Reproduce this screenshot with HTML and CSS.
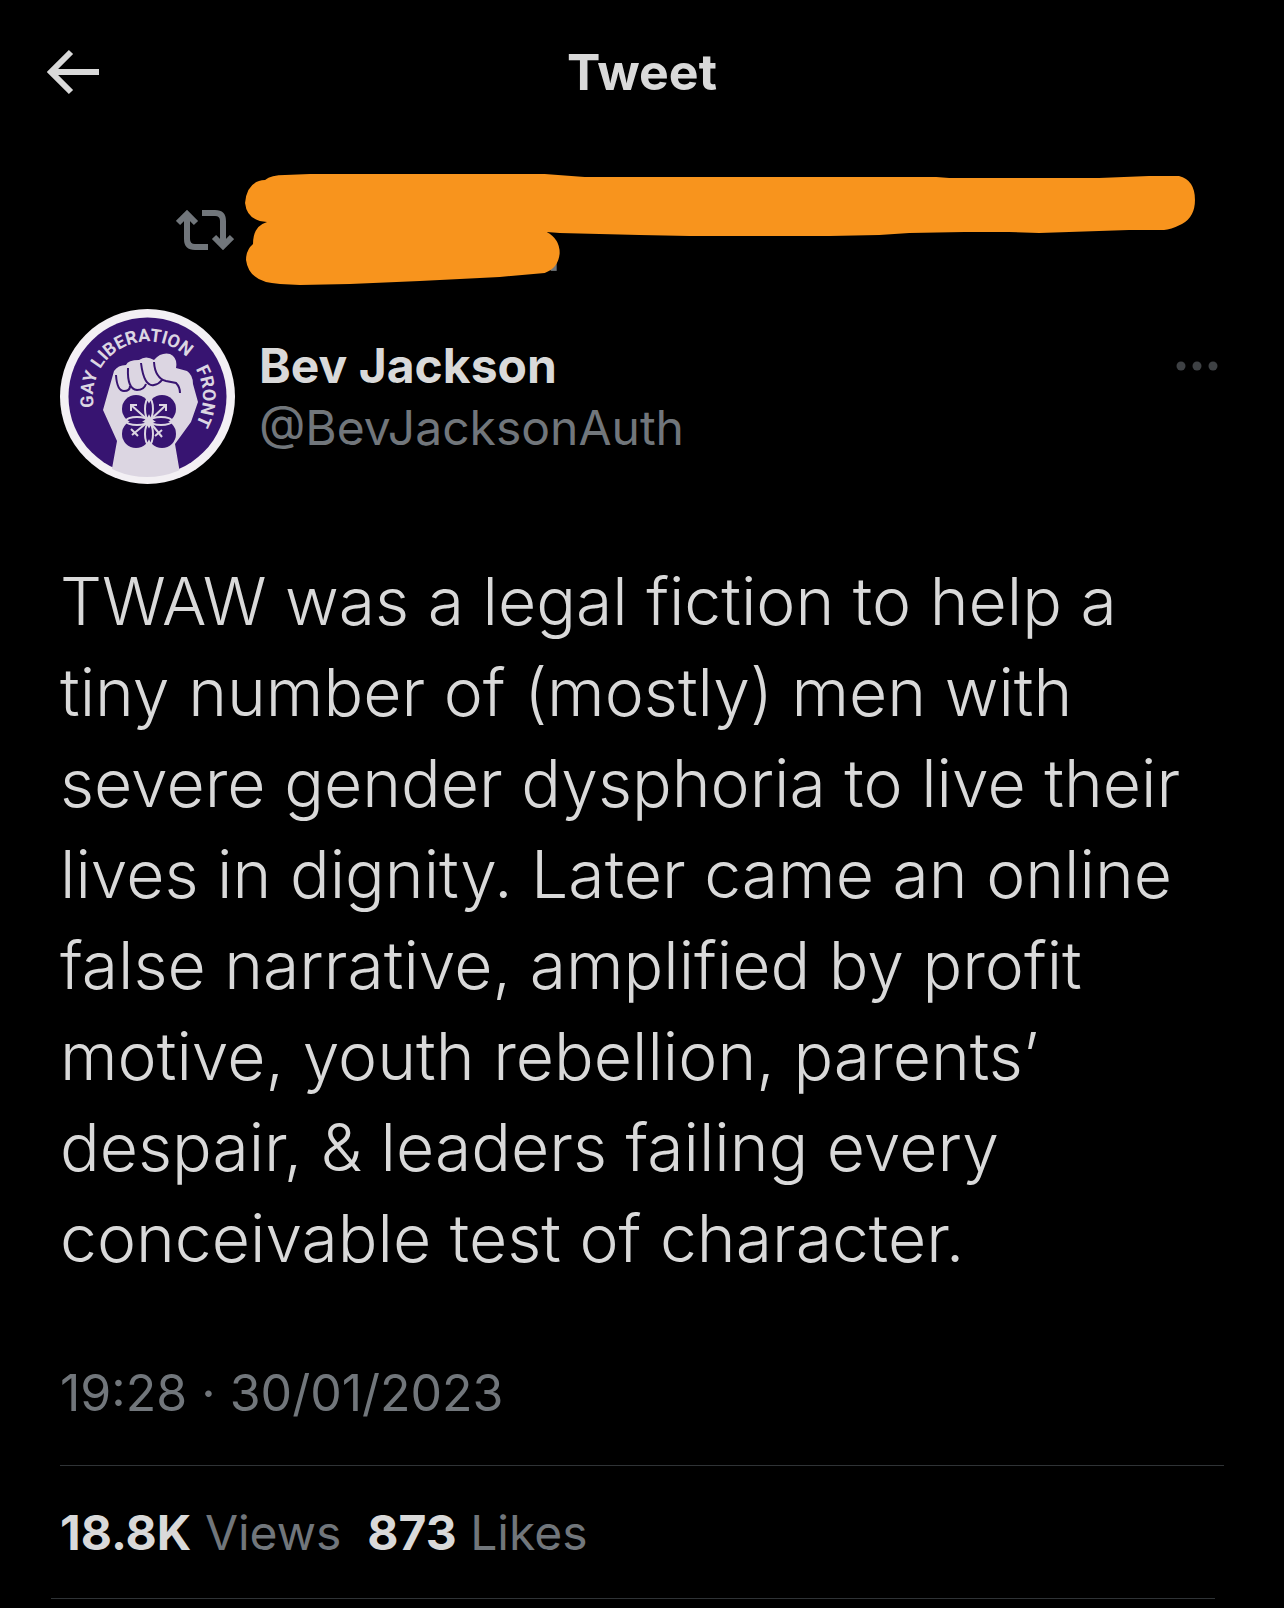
FILE: index.html
```html
<!DOCTYPE html>
<html lang="en">
<head>
    <meta charset="UTF-8">
    <meta name="viewport" content="width=device-width, initial-scale=1.0">
    <title>Tweet</title>
    <link rel="stylesheet" href="styles.css">
</head>
<body>

    <header class="topbar">
        <a href="#" class="topbar__back" aria-label="Back">
            <svg class="topbar__arrow" viewBox="0 0 54 46" aria-hidden="true">
                <path d="M25 3 5 23l20 20M5 23h48" />
            </svg>
        </a>
        <h1 class="topbar__title">Tweet</h1>
    </header>

    <main class="tweet">
        <div class="retweet">
            <svg class="retweet__icon" viewBox="0 0 58 40" aria-hidden="true">
                <path d="M2 13 11 4l9 9M11 4v25q0 8 8 8h13M38 27l9 9 9-9M47 36V11q0-8-8-8H26" />
            </svg>
            <svg class="retweet__scribble" viewBox="0 0 952 112" aria-hidden="true">
                <path class="retweet__edge" d="M306 87h6v10h-6z" />
                <path d="M0 29Q2 7 20 6Q26 1 40 1L65 0H300L340 3H692L705 4H855L905 2H935Q951 6 951 26Q951 43 938 50Q926 56 920 56H885L795 59L765 58H720L665 59L635 61L585 62H445L395 61L315 59L302 58Q315 65 315 79Q314 94 300 99L255 103L175 107L105 110L55 111L35 110Q4 109 1 86Q1 76 8 70Q8 52 22 48Q2 47 0 29Z" />
            </svg>
        </div>

        <div class="author">
            <svg class="author__avatar" viewBox="0 0 175 175" role="img" aria-label="Gay Liberation Front badge">
                <defs>
                    <clipPath id="badgeClip"><circle cx="87" cy="88" r="80" /></clipPath>
                    <path id="badgeArc" d="M34 98 A55 55 0 1 1 130 123" />
                </defs>
                <circle cx="87.500" cy="87.500" r="87.500" fill="#f3f0f4" />
                <circle cx="87.500" cy="87.500" r="79" fill="#371471" />
                <g clip-path="url(#badgeClip)">
                    <path fill="#dcd6e2" d="M51 165 57 132 43 101 54 62Q58 56 66 56Q68 51 79 51Q86 46 94 51Q101 43 110 45Q118 49 116 59L127 62Q133 66 133 75L138 93 131 113 115 135 121 170H51Z" />
                </g>
                <g fill="none" stroke="#371471" stroke-width="2">
                    <path d="M56 66Q57 82 64 82Q70 82 70 77M68 59Q67 80 77 81Q84 81 86 75M81 54Q84 78 94 76Q99 75 102 71M94 53Q95 69 106 72L116 74Q120 78 120 84" />
                </g>
                <g fill="#371471">
                    <circle cx="76" cy="100" r="14" />
                    <circle cx="102" cy="100" r="14" />
                    <circle cx="76" cy="125" r="14" />
                    <circle cx="102" cy="125" r="14" />
                </g>
                <g fill="none" stroke="#dcd6e2" stroke-width="2">
                    <ellipse cx="89" cy="100" rx="4" ry="11" />
                    <ellipse cx="89" cy="125" rx="4" ry="11" />
                    <ellipse cx="77" cy="112" rx="11" ry="4" />
                    <ellipse cx="101" cy="112" rx="11" ry="4" />
                    <path d="M89 112 71 96M71 102v-6h6M89 112 105 97M99 96h7v6M89 112 72 126M71 120l7 7M89 112 102 128M95 127l7-6" />
                </g>
                <text class="author__badge-text"><textPath href="#badgeArc">GAY LIBERATION</textPath></text>
                <text class="author__badge-text"><textPath href="#badgeArc" startOffset="154">FRONT</textPath></text>
            </svg>
            <div class="author__names">
                <span class="author__name">Bev Jackson</span>
                <a href="#" class="author__handle">@BevJacksonAuth</a>
            </div>
            <button type="button" class="author__more" aria-label="More">
                <svg class="author__dots" viewBox="0 0 42 10" aria-hidden="true">
                    <circle cx="5" cy="5" r="4.500" />
                    <circle cx="21" cy="5" r="4.500" />
                    <circle cx="37" cy="5" r="4.500" />
                </svg>
            </button>
        </div>

        <p class="tweet__text">TWAW was a legal fiction to help a tiny number of (mostly) men with severe gender dysphoria to live their lives in dignity. Later came an online false narrative, amplified by profit motive, youth rebellion, parents’ despair, &amp; leaders failing every conceivable test of character.</p>

        <time class="tweet__time" datetime="2023-01-30T19:28">19:28 · 30/01/2023</time>

        <div class="stats">
            <span class="stats__item"><strong class="stats__count">18.8K</strong> Views</span>
            <a href="#" class="stats__item"><strong class="stats__count">873</strong> Likes</a>
        </div>
    </main>
    <hr class="divider">

</body>
</html>
```
FILE: styles.css
```css
:root {
    --color-bg: #000000;
    --color-text: #d9d9d9;
    --color-muted: #71767b;
    --color-border: #2f3336;
    --color-scribble: #f8941d;

    --font-family-sans-serif: Inter, "Liberation Sans", Arial, sans-serif;
    --font-size-small: 48px;
    --font-size-medium: 50px;
    --font-size-large: 66px;
    --page-padding: 60px;
}

*,
*::before,
*::after {
    box-sizing: border-box;
}

body {
    margin: 0;
    font-family: var(--font-family-sans-serif);
    font-size: var(--font-size-small);
    line-height: 62px;
    color: var(--color-text);
    background: var(--color-bg);
}

a { color: inherit; text-decoration: none; }

/* Top bar */
.topbar {
    display: grid;
    grid-template-columns: 1fr auto 1fr;
    align-items: center;
    height: 144px;
    padding: 0 46px;
}

.topbar__back,
.topbar__arrow {
    display: block;
    width: 54px;
}

.topbar__arrow {
    fill: none;
    stroke: var(--color-text);
    stroke-width: 6;
}

.topbar__title {
    margin: 0;
    font-size: var(--font-size-medium);
    font-weight: 700;
}

.tweet { padding: 0 var(--page-padding); }

/* Retweet line */
.retweet {
    display: flex;
    align-items: center;
    gap: 11px;
    padding: 30px 28px 23px 116px;
}

.retweet__icon {
    flex: none;
    width: 58px;
    fill: none;
    stroke: var(--color-muted);
    stroke-width: 6;
}

.retweet__scribble {
    flex: 1;
    min-width: 0;
    fill: var(--color-scribble);
}

.retweet__edge { fill: var(--color-muted); }

/* Author */
.author {
    display: flex;
    align-items: flex-start;
    gap: 24px;
}

.author__avatar {
    flex: none;
    width: 175px;
    height: 175px;
}

.author__badge-text {
    font-family: "Liberation Sans Narrow", Roboto, sans-serif;
    font-size: 18px;
    font-weight: 700;
    fill: #dcd6e2;
}

.author__names {
    display: flex;
    flex: 1;
    flex-direction: column;
    padding-top: 26px;
}

.author__name { font-weight: 700; }
.author__handle { color: var(--color-muted); }

.author__more {
    padding: 52px 6px 20px;
    border: none;
    background: transparent;
    cursor: pointer;
}

.author__dots {
    display: block;
    width: 42px;
    fill: #3e4144;
}

/* Body */
.tweet__text {
    margin: 72px 0 78px;
    font-size: var(--font-size-large);
    font-weight: 300;
    line-height: 91px;
}

.tweet__time {
    display: block;
    padding-bottom: 41px;
    font-size: var(--font-size-medium);
    color: var(--color-muted);
    border-bottom: 1px solid var(--color-border);
}

.stats {
    display: flex;
    gap: 26px;
    padding: 36px 0 34px;
    color: var(--color-muted);
}

.stats__count {
    font-weight: 700;
    color: var(--color-text);
}

.divider {
    height: 1px;
    margin: 0 69px 0 51px;
    border: none;
    background: var(--color-border);
}
```
